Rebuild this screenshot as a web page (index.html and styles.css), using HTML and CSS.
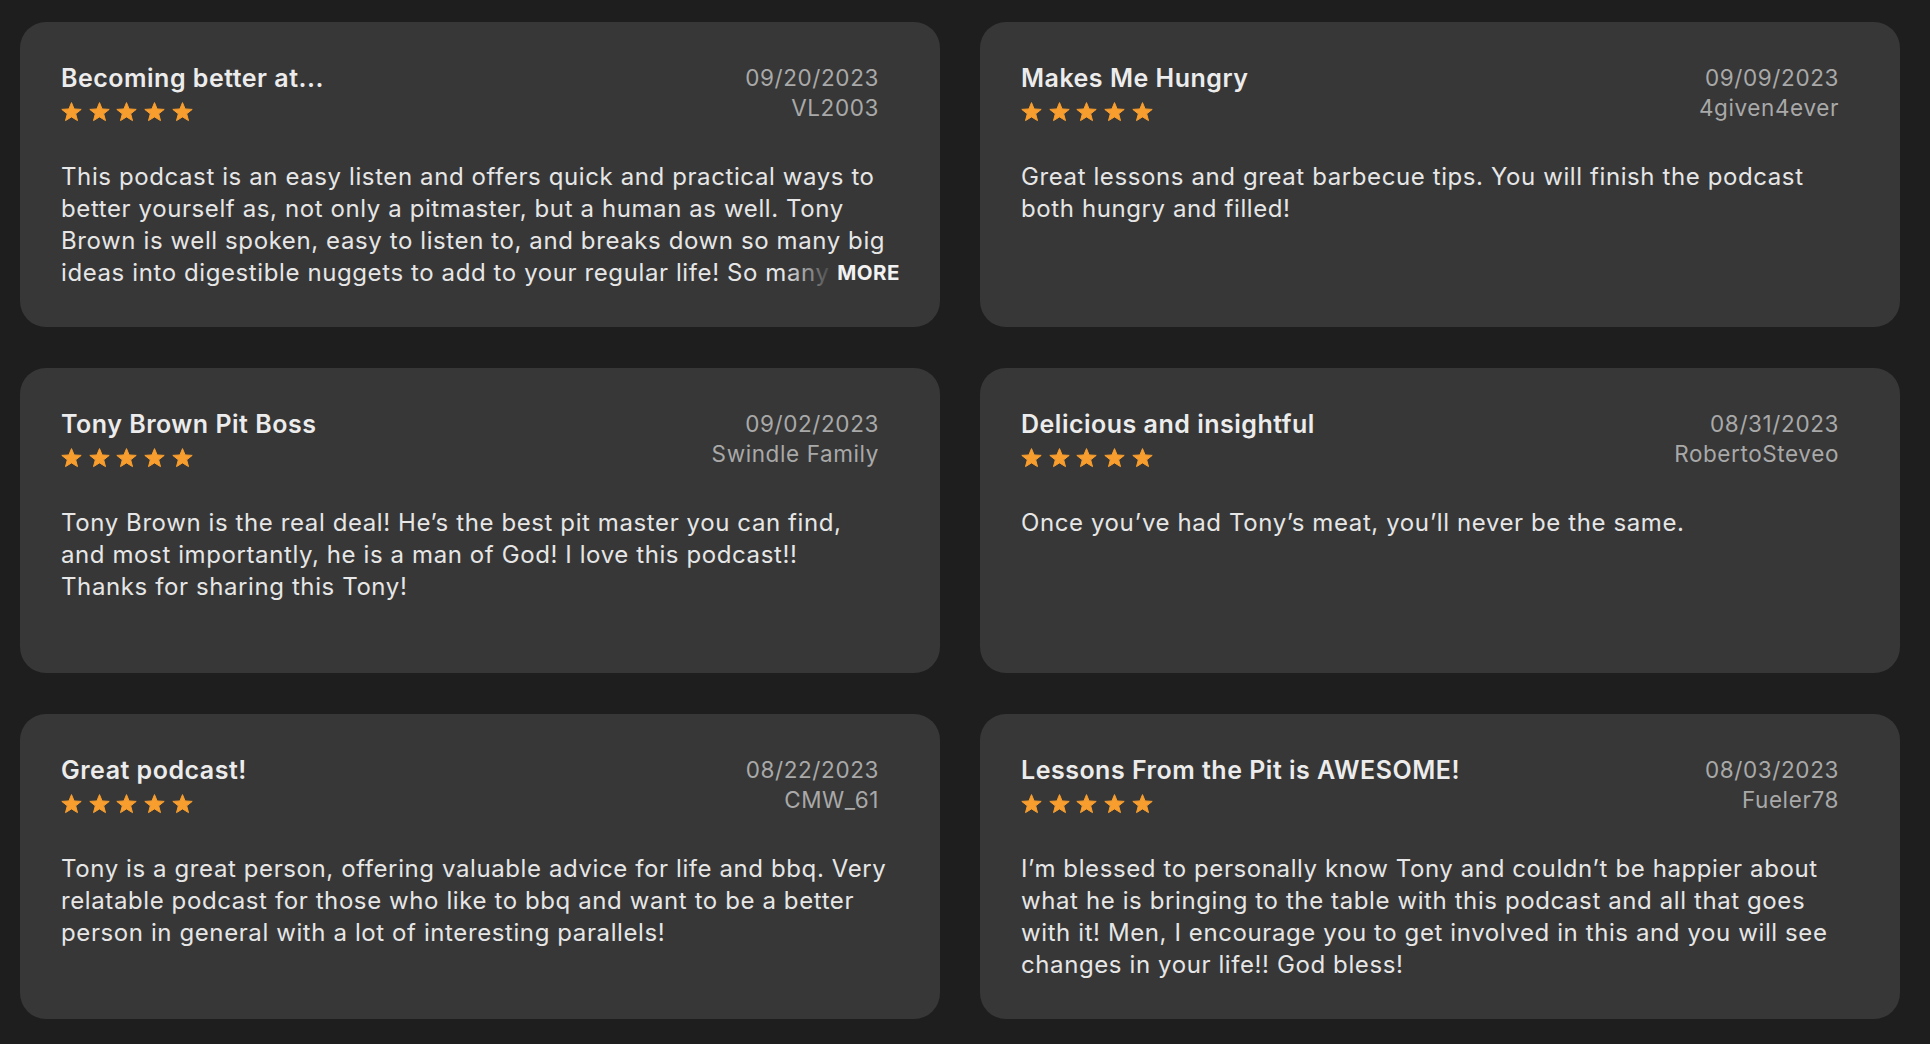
FILE: index.html
```html
<!DOCTYPE html>
<html lang="en">
<head>
<meta charset="utf-8">
<title>Reviews</title>
<link rel="stylesheet" href="styles.css">
</head>
<body>
<svg width="0" height="0" class="defs">
  <defs>
    <symbol id="star" viewBox="0 0 21 20">
      <polygon points="10.5,0.6 13.09,6.94 20.2,7.4 14.68,11.86 16.5,18.6 10.5,14.9 4.5,18.6 6.32,11.86 0.8,7.4 7.91,6.94" fill="#f89e2e" stroke="#f89e2e" stroke-width="1" stroke-linejoin="round"/>
    </symbol>
  </defs>
</svg>
<main class="grid">
  <article class="card">
    <header class="head">
      <div class="left">
        <h2 class="title">Becoming better at...</h2>
        <div class="stars"><svg class="star"><use href="#star"/></svg><svg class="star"><use href="#star"/></svg><svg class="star"><use href="#star"/></svg><svg class="star"><use href="#star"/></svg><svg class="star"><use href="#star"/></svg></div>
      </div>
      <div class="meta"><div>09/20/2023</div><div>VL2003</div></div>
    </header>
    <div class="body clamp">
      <p>This podcast is an easy listen and offers quick and practical ways to better yourself as, not only a pitmaster, but a human as well. Tony Brown is well spoken, easy to listen to, and breaks down so many big ideas into digestible nuggets to add to your regular life! So many great lessons in every single episode, highly recommend.</p>
      <span class="more">MORE</span>
    </div>
  </article>

  <article class="card">
    <header class="head">
      <div class="left">
        <h2 class="title">Makes Me Hungry</h2>
        <div class="stars"><svg class="star"><use href="#star"/></svg><svg class="star"><use href="#star"/></svg><svg class="star"><use href="#star"/></svg><svg class="star"><use href="#star"/></svg><svg class="star"><use href="#star"/></svg></div>
      </div>
      <div class="meta"><div>09/09/2023</div><div>4given4ever</div></div>
    </header>
    <div class="body">
      <p>Great lessons and great barbecue tips. You will finish the podcast both hungry and filled!</p>
    </div>
  </article>

  <article class="card">
    <header class="head">
      <div class="left">
        <h2 class="title">Tony Brown Pit Boss</h2>
        <div class="stars"><svg class="star"><use href="#star"/></svg><svg class="star"><use href="#star"/></svg><svg class="star"><use href="#star"/></svg><svg class="star"><use href="#star"/></svg><svg class="star"><use href="#star"/></svg></div>
      </div>
      <div class="meta"><div>09/02/2023</div><div>Swindle Family</div></div>
    </header>
    <div class="body">
      <p>Tony Brown is the real deal! He’s the best pit master you can find, and most importantly, he is a man of God! I love this podcast!! Thanks for sharing this Tony!</p>
    </div>
  </article>

  <article class="card">
    <header class="head">
      <div class="left">
        <h2 class="title">Delicious and insightful</h2>
        <div class="stars"><svg class="star"><use href="#star"/></svg><svg class="star"><use href="#star"/></svg><svg class="star"><use href="#star"/></svg><svg class="star"><use href="#star"/></svg><svg class="star"><use href="#star"/></svg></div>
      </div>
      <div class="meta"><div>08/31/2023</div><div>RobertoSteveo</div></div>
    </header>
    <div class="body">
      <p>Once you’ve had Tony’s meat, you’ll never be the same.</p>
    </div>
  </article>

  <article class="card">
    <header class="head">
      <div class="left">
        <h2 class="title">Great podcast!</h2>
        <div class="stars"><svg class="star"><use href="#star"/></svg><svg class="star"><use href="#star"/></svg><svg class="star"><use href="#star"/></svg><svg class="star"><use href="#star"/></svg><svg class="star"><use href="#star"/></svg></div>
      </div>
      <div class="meta"><div>08/22/2023</div><div>CMW_61</div></div>
    </header>
    <div class="body">
      <p>Tony is a great person, offering valuable advice for life and bbq. Very relatable podcast for those who like to bbq and want to be a better person in general with a lot of interesting parallels!</p>
    </div>
  </article>

  <article class="card">
    <header class="head">
      <div class="left">
        <h2 class="title">Lessons From the Pit is AWESOME!</h2>
        <div class="stars"><svg class="star"><use href="#star"/></svg><svg class="star"><use href="#star"/></svg><svg class="star"><use href="#star"/></svg><svg class="star"><use href="#star"/></svg><svg class="star"><use href="#star"/></svg></div>
      </div>
      <div class="meta"><div>08/03/2023</div><div>Fueler78</div></div>
    </header>
    <div class="body">
      <p>I’m blessed to personally know Tony and couldn’t be happier about what he is bringing to the table with this podcast and all that goes with it! Men, I encourage you to get involved in this and you will see changes in your life!! God bless!</p>
    </div>
  </article>
</main>
</body>
</html>
```

FILE: styles.css
```css
html, body {
  margin: 0;
  padding: 0;
  background: #1e1e1e;
}

body {
  font-family: Inter, "Noto Sans", "Liberation Sans", sans-serif;
  -webkit-font-smoothing: antialiased;
}

.defs {
  position: absolute;
  width: 0;
  height: 0;
}

.grid {
  display: grid;
  grid-template-columns: 1fr 1fr;
  grid-auto-rows: 305px;
  column-gap: 40px;
  row-gap: 41px;
  padding: 22px 30px 0 20px;
}

.card {
  background: #373737;
  border-radius: 26px;
  padding: 41px 49px 0 41px;
  box-sizing: border-box;
  overflow: hidden;
}

.head {
  display: flex;
  justify-content: space-between;
  align-items: flex-start;
}

.title {
  margin: 0;
  font-size: 25px;
  line-height: 30px;
  font-weight: 600;
  color: #ececec;
  letter-spacing: 0.5px;
}

.stars {
  display: flex;
  gap: 6.7px;
  margin-top: 9px;
}

.star {
  width: 21px;
  height: 20px;
  display: block;
}

.meta {
  margin-right: 12px;
  text-align: right;
  font-size: 22.5px;
  line-height: 30px;
  color: #a9a9a9;
  letter-spacing: 0.6px;
}

.body {
  position: relative;
  margin-top: 38px;
}

.body p {
  margin: 0;
  font-size: 24px;
  line-height: 32px;
  color: #e6e6e6;
  letter-spacing: 0.6px;
}

.clamp p {
  max-height: 128px;
  overflow: hidden;
}

.more {
  position: absolute;
  right: -9px;
  bottom: 0;
  line-height: 32px;
  font-size: 20.5px;
  font-weight: 700;
  color: #f2f2f2;
  letter-spacing: 0.5px;
  padding-left: 2px;
  background: #373737;
}

.more::before {
  content: "";
  position: absolute;
  right: 100%;
  top: 0;
  bottom: 0;
  width: 50px;
  background: linear-gradient(to right, rgba(55,55,55,0), #373737);
}
```
